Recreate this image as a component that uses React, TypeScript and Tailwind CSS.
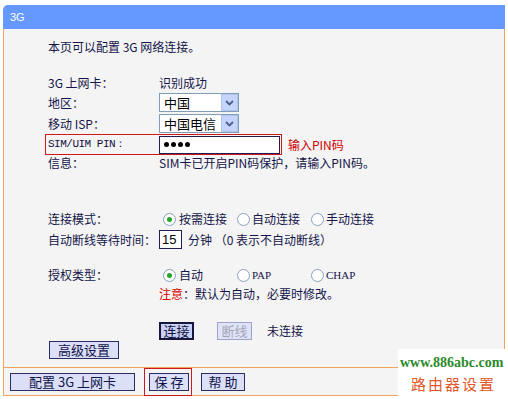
import React from "react";

/* ---------- small parts ---------- */
const font = "font-['Noto_Sans_CJK_SC',sans-serif]";

function Radio({ checked }: { checked?: boolean }) {
  return (
    <span className="w-[13px] h-[13px] rounded-full border border-[#8aa0bd] bg-white flex items-center justify-center shrink-0">
      {checked && <span className="w-[5px] h-[5px] rounded-full bg-[#29a329]" />}
    </span>
  );
}

function Select({ value }: { value: string }) {
  return (
    <div className="w-[80px] h-[19px] border border-[#7f9db9] bg-white flex items-center">
      <span className="flex-1 pl-[4px] text-[13px] leading-[17px] text-black">{value}</span>
      <span className="w-[17px] h-[17px] bg-[#c4d4fb] border border-[#b1c3ef] flex items-center justify-center">
        <svg width="9" height="6" viewBox="0 0 9 6">
          <path d="M1 1 L4.5 4.5 L8 1" stroke="#4a5f8c" strokeWidth="1.8" fill="none" />
        </svg>
      </span>
    </div>
  );
}

function Btn({ children, w, strong, disabled }: { children: React.ReactNode; w: string; strong?: boolean; disabled?: boolean }) {
  const cls = strong
    ? "border-2 border-[#16163f] bg-[#c9d0f6] text-[#10103f]"
    : disabled
    ? "border border-[#9fa1cf] bg-[#dfe3f8] text-[#a3a6b8]"
    : "border border-[#2c2c66] bg-[#dbe0f8] text-[#10104a]";
  return (
    <div className={`${w} h-[18px] flex items-center justify-center text-[13px] leading-[16px] ${cls}`}>{children}</div>
  );
}

/* ---------- page ---------- */
export default function App() {
  const label = "w-[111px] shrink-0";
  return (
    <div className={`relative w-[508px] h-[399px] bg-white overflow-hidden text-[12px] text-[#14144a] ${font}`}>
      <div className="ml-[3px] pt-[5px] w-[502px]">
        {/* header */}
        <div className="h-[24px] bg-[#6699ff] rounded-tl-[5px] flex items-center pl-[7px]">
          <span className="text-white text-[11px] font-['Liberation_Sans',sans-serif]">3G</span>
        </div>

        {/* body */}
        <div className="h-[338px] bg-[#f4f4f4] border-x border-[#f2a35c] pl-[44px] pt-[9px]">
          <div className="h-[18px] flex items-center">本页可以配置 3G 网络连接。</div>

          <div className="mt-[18px] h-[18px] flex items-center">
            <span className={label}>3G 上网卡：</span>
            <span>识别成功</span>
          </div>

          <div className="mt-[1px] h-[19px] flex items-center">
            <span className={label}>地区：</span>
            <Select value="中国" />
          </div>

          <div className="mt-[2px] h-[19px] flex items-center">
            <span className={label}>移动 ISP：</span>
            <Select value="中国电信" />
          </div>

          <div className="mt-[1px] flex items-center">
            <div className="-ml-[3px] w-[237px] h-[21px] border border-[#cc1a1a] pl-[2px] flex items-center">
              <span className={`${label} font-['Liberation_Mono',monospace] text-[11px] tracking-[-0.5px] text-[#10103f]`}>SIM/UIM PIN：</span>
              <div className="w-[121px] h-[18px] border border-[#1e1e55] bg-white flex items-center pl-[4px] gap-[2px]">
                {[0, 1, 2, 3].map((i) => (
                  <span key={i} className="w-[5px] h-[5px] rounded-full bg-black" />
                ))}
              </div>
            </div>
            <span className="ml-[6px] text-[#d00000]">输入PIN码</span>
          </div>

          <div className="h-[16px] flex items-center">
            <span className={label}>信息：</span>
            <span>SIM卡已开启PIN码保护，请输入PIN码。</span>
          </div>

          <div className="mt-[39px] h-[18px] flex items-center">
            <span className={label}>连接模式：</span>
            <div className="flex items-center pl-[4px]">
              <span className="w-[74px] flex items-center gap-[3px]"><Radio checked />按需连接</span>
              <span className="w-[74px] flex items-center gap-[2px]"><Radio />自动连接</span>
              <span className="flex items-center gap-[2px]"><Radio />手动连接</span>
            </div>
          </div>

          <div className="mt-[2px] h-[19px] flex items-center">
            <span className={label}>自动断线等待时间：</span>
            <div className="w-[23px] h-[19px] border border-[#1e1e55] bg-white flex items-center pl-[2px] text-[13px] text-black font-['Liberation_Sans',sans-serif]">15</div>
            <span className="ml-[6px]">分钟 （0 表示不自动断线）</span>
          </div>

          <div className="mt-[17px] h-[18px] flex items-center">
            <span className={label}>授权类型：</span>
            <div className="flex items-center pl-[4px]">
              <span className="w-[74px] flex items-center gap-[3px]"><Radio checked />自动</span>
              <span className="w-[74px] flex items-center gap-[2px] font-['Liberation_Serif',serif] text-[11px]"><Radio />PAP</span>
              <span className="flex items-center gap-[2px] font-['Liberation_Serif',serif] text-[11px]"><Radio />CHAP</span>
            </div>
          </div>

          <div className="mt-[2px] h-[16px] flex items-center">
            <span className={label}></span>
            <span><span className="text-[#dd0000]">注意</span>：默认为自动，必要时修改。</span>
          </div>

          <div className="mt-[20px] h-[18px] flex items-center">
            <span className={label}></span>
            <Btn w="w-[35px]" strong>连接</Btn>
            <span className="ml-[23px]"><Btn w="w-[35px]" disabled>断线</Btn></span>
            <span className="ml-[15px]">未连接</span>
          </div>

          <div className="mt-[1px] h-[17px] flex items-center pl-[1px]">
            <Btn w="w-[70px]">高级设置</Btn>
          </div>
        </div>

        {/* footer */}
        <div className="h-[29px] bg-[#f4f4f4] border border-[#f2a35c] flex items-center pl-[6px]">
          <Btn w="w-[125px]">配置 3G 上网卡</Btn>
          <div className="ml-[9px] h-[28px] border border-[#cc1a1a] flex items-center pl-[4px] pr-[2px]">
            <Btn w="w-[40px]">保 存</Btn>
          </div>
          <span className="ml-[9px]"><Btn w="w-[44px]">帮 助</Btn></span>
        </div>
      </div>

      {/* watermark */}
      <div className="absolute left-[398px] top-[349px] w-[110px] h-[50px] bg-white flex flex-col items-start pl-[2px]">
        <span className="font-['Liberation_Serif',serif] font-bold text-[14px] leading-[16px] text-[#2c8a2c] mt-[6px]">www.886abc.com</span>
        <span className="text-[15px] leading-[20px] tracking-[2px] text-[#e2582a] mt-[3px] ml-[11px]">路由器设置</span>
      </div>
    </div>
  );
}
